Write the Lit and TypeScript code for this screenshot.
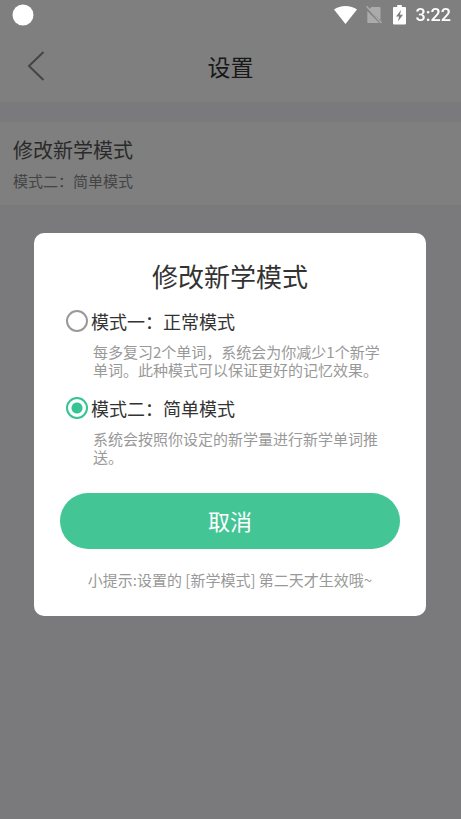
import { LitElement, html, css } from "lit";
import { customElement, property, state } from "lit/decorators.js";

interface StudyMode {
  id: string;
  label: string;
  description: string;
}

const MODES: StudyMode[] = [
  {
    id: "normal",
    label: "模式一：正常模式",
    description:
      "每多复习2个单词，系统会为你减少1个新学单词。此种模式可以保证更好的记忆效果。",
  },
  {
    id: "simple",
    label: "模式二：简单模式",
    description: "系统会按照你设定的新学量进行新学单词推送。",
  },
];

@customElement("status-bar")
class StatusBar extends LitElement {
  static styles = css`
    :host {
      display: flex;
      align-items: center;
      justify-content: space-between;
      box-sizing: border-box;
      height: 30px;
      padding: 0 10px 0 12px;
      color: #fff;
      font: 500 18px/32px Roboto, sans-serif;
    }
    .icons {
      display: flex;
      align-items: center;
    }
    svg {
      display: block;
      fill: currentColor;
    }
    .sim {
      margin-left: 8px;
      opacity: 0.35;
    }
    .battery {
      margin-left: 11px;
    }
    .time {
      margin-left: 10px;
    }
  `;

  render() {
    return html`
      <svg width="22" height="22" viewBox="0 0 22 22"><circle cx="11" cy="11" r="10.5" /></svg>
      <div class="icons">
        <svg width="23" height="20" viewBox="0 0 23 20">
          <path d="M0 4.600C3.200 2.200 7.100 1 11.500 1s8.300 1.200 11.500 3.600L11.500 19z" />
        </svg>
        <svg class="sim" width="17" height="20" viewBox="0 0 17 20">
          <path d="M6.500 2H14.500q1 0 1 1V15.200L4.300 4.200z" />
          <path d="M2.300 6L14.200 18H3.300q-1 0-1-1z" />
          <path d="M1 1.800L2.100.8 17 17.500 15.900 18.500z" />
        </svg>
        <svg class="battery" width="13" height="20" viewBox="0 0 13 20">
          <path
            fill-rule="evenodd"
            d="M4.200 0h4.600v2H12q1 0 1 1v15.500q0 1-1 1H1q-1 0-1-1V3q0-1 1-1h3.200zM8 5L3 11.500h3L5 16.500l5-6.700H7z"
          />
        </svg>
        <span class="time">3:22</span>
      </div>
    `;
  }
}

@customElement("mode-dialog")
class ModeDialog extends LitElement {
  static styles = css`
    :host {
      display: block;
      box-sizing: border-box;
      width: 100%;
      padding: 24px 26px;
      border-radius: 10px;
      background: #fff;
      color: #333;
    }
    h2 {
      margin: 0 0 14px;
      font-size: 26px;
      font-weight: 400;
      line-height: 38px;
      text-align: center;
    }
    fieldset {
      display: grid;
      gap: 17px;
      margin: 0;
      padding: 0 12px 0 6px;
      border: 0;
      min-width: 0;
    }
    .label {
      display: flex;
      align-items: center;
      gap: 3px;
      font-size: 18px;
      line-height: 24px;
    }
    input {
      appearance: none;
      flex: none;
      box-sizing: border-box;
      width: 22px;
      height: 22px;
      margin: 0;
      border: 2px solid #999;
      border-radius: 50%;
    }
    input:checked {
      border-color: #35c594;
      background: radial-gradient(circle, #35c594 5px, transparent 6px);
    }
    .description {
      margin: 10px 0 0 27px;
      color: #999;
      font-size: 15px;
      line-height: 18px;
    }
    button {
      display: block;
      width: 100%;
      height: 56px;
      margin: 27px 0 19px;
      padding: 0 0 2px;
      border: 0;
      border-radius: 28px;
      background: #44c595;
      color: #fff;
      font: inherit;
      font-size: 22px;
    }
    .hint {
      margin: 0;
      padding-bottom: 1px;
      color: #999;
      font-size: 15px;
      line-height: 23px;
      text-align: center;
    }
  `;

  @property() selected = "";

  private choose(id: string) {
    this.dispatchEvent(new CustomEvent("mode-change", { detail: id }));
  }

  render() {
    return html`
      <h2 id="title">修改新学模式</h2>
      <fieldset aria-labelledby="title">
        ${MODES.map(
          (mode) => html`
            <div>
              <label class="label">
                <input
                  type="radio"
                  name="mode"
                  aria-describedby=${mode.id}
                  .checked=${mode.id === this.selected}
                  @change=${() => this.choose(mode.id)}
                />
                <span>${mode.label}</span>
              </label>
              <p class="description" id=${mode.id}>${mode.description}</p>
            </div>
          `,
        )}
      </fieldset>
      <button type="button" @click=${() => this.dispatchEvent(new CustomEvent("cancel"))}>
        取消
      </button>
      <p class="hint">小提示:设置的 [新学模式] 第二天才生效哦~</p>
    `;
  }
}

@customElement("app-root")
class AppRoot extends LitElement {
  static styles = css`
    :host {
      display: block;
      min-height: 100vh;
      background: #f4f5f9;
      color: #333;
      font-family: "Noto Sans CJK SC", sans-serif;
    }
    .top {
      padding-top: 30px;
      background: #fff;
    }
    header {
      display: grid;
      grid-template-columns: 48px 1fr 48px;
      align-items: center;
      height: 72px;
      padding: 0 12px;
    }
    .back {
      display: grid;
      place-items: center;
      height: 48px;
      padding: 0;
      border: 0;
      background: none;
      color: #888;
    }
    .back svg {
      fill: none;
      stroke: currentColor;
      stroke-width: 2;
    }
    h1 {
      margin: 0;
      font-size: 23px;
      font-weight: 400;
      line-height: 36px;
      text-align: center;
    }
    .item {
      display: block;
      width: 100%;
      margin-top: 20px;
      padding: 12px 13px;
      border: 0;
      background: #fff;
      color: #555;
      font: inherit;
      text-align: left;
    }
    .name,
    .value {
      display: block;
    }
    .name {
      font-size: 20px;
      line-height: 32px;
    }
    .value {
      margin-top: 3px;
      color: #888;
      font-size: 15px;
      line-height: 24px;
    }
    status-bar {
      position: fixed;
      inset: 0 0 auto;
      z-index: 2;
    }
    .overlay {
      position: fixed;
      inset: 0;
      z-index: 1;
      display: flex;
      align-items: center;
      padding: 30px 35px 0 34px;
      background: rgba(0, 0, 0, 0.5);
    }
  `;

  @state() private mode = "simple";
  @state() private open = true;

  render() {
    const current = MODES.find((m) => m.id === this.mode);
    return html`
      <status-bar></status-bar>
      <div class="top">
        <header>
          <button class="back" type="button" aria-label="返回">
            <svg width="18" height="30" viewBox="0 0 18 30"><path d="M16.500 1L2 15l14.500 14" /></svg>
          </button>
          <h1>设置</h1>
        </header>
      </div>
      <main>
        <button class="item" type="button" @click=${() => (this.open = true)}>
          <span class="name">修改新学模式</span>
          <span class="value">${current?.label}</span>
        </button>
      </main>
      ${this.open
        ? html`<div class="overlay">
            <mode-dialog
              role="dialog"
              aria-modal="true"
              aria-label="修改新学模式"
              .selected=${this.mode}
              @mode-change=${(e: CustomEvent<string>) => (this.mode = e.detail)}
              @cancel=${() => (this.open = false)}
            ></mode-dialog>
          </div>`
        : null}
    `;
  }
}
